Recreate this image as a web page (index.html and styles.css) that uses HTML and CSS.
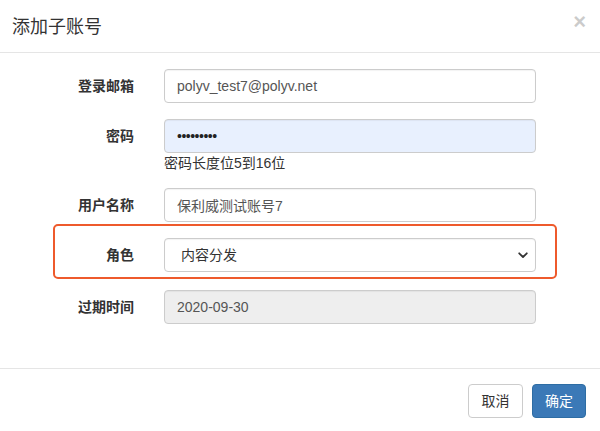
FILE: index.html
```html
<!DOCTYPE html>
<html lang="zh-CN">
<head>
    <meta charset="UTF-8">
    <meta name="viewport" content="width=device-width, initial-scale=1.0">
    <title>添加子账号</title>
    <link rel="stylesheet" href="styles.css">
</head>
<body>
    <div class="modal">
        <div class="modal-header">
            <h4 class="modal-title">添加子账号</h4>
            <button type="button" class="close">&times;</button>
        </div>
        <form class="modal-body">
            <div class="form-row row-email">
                <label class="form-label">登录邮箱</label>
                <input class="form-control" type="text" value="polyv_test7@polyv.net">
            </div>
            <div class="form-row row-password">
                <label class="form-label">密码</label>
                <div>
                    <input class="form-control autofilled" type="password" value="123456789">
                    <p class="help-text">密码长度位5到16位</p>
                </div>
            </div>
            <div class="form-row row-name">
                <label class="form-label">用户名称</label>
                <input class="form-control" type="text" value="保利威测试账号7">
            </div>
            <div class="form-row row-role highlight">
                <label class="form-label">角色</label>
                <div class="select-wrap">
                    <select class="form-control">
                        <option>内容分发</option>
                    </select>
                    <svg class="select-arrow" width="10" height="7" viewBox="0 0 10 7">
                        <path d="M1.2 1.3 L5 5 L8.8 1.3" fill="none" stroke="#333" stroke-width="1.8" stroke-linecap="round" stroke-linejoin="round"/>
                    </svg>
                </div>
            </div>
            <div class="form-row row-expire">
                <label class="form-label">过期时间</label>
                <input class="form-control" type="text" value="2020-09-30" disabled>
            </div>
        </form>
        <div class="modal-footer">
            <button type="button" class="btn btn-default">取消</button>
            <button type="button" class="btn btn-primary">确定</button>
        </div>
    </div>
</body>
</html>
```

FILE: styles.css
```css
* {
    margin: 0;
    padding: 0;
    box-sizing: border-box;
}

body {
    background-color: #ffffff;
    color: #333333;
    font-family: "Liberation Sans", "Noto Sans CJK SC", sans-serif;
    font-size: 14px;
    line-height: 20px;
}

.modal {
    width: 600px;
    height: 431px;
    background-color: #ffffff;
}

.modal-header {
    display: flex;
    align-items: center;
    justify-content: space-between;
    height: 53px;
    padding: 0 14px 0 12px;
    border-bottom: 1px solid #e5e5e5;
}

.modal-title {
    font-size: 18px;
    font-weight: normal;
    color: #333333;
    line-height: 26px;
    margin-top: 1px;
}

.close {
    border: none;
    background: transparent;
    font-size: 22px;
    font-weight: bold;
    line-height: 1;
    color: #000000;
    opacity: 0.2;
    cursor: pointer;
    margin-top: -8px;
}

.modal-body {
    padding: 16px 0 44px 0;
}

.form-row {
    display: grid;
    grid-template-columns: 134px 372px;
    column-gap: 30px;
    align-items: start;
}

.row-email {
    margin-bottom: 16px;
}

.row-password {
    margin-bottom: 15px;
}

.row-name {
    margin-bottom: 16px;
}

.row-role {
    margin-bottom: 18px;
}

.form-label {
    text-align: right;
    font-weight: bold;
    padding-top: 7px;
    line-height: 20px;
}

.form-control {
    display: block;
    width: 100%;
    height: 34px;
    padding: 6px 12px;
    font-family: inherit;
    font-size: 14px;
    line-height: 20px;
    color: #555555;
    background-color: #ffffff;
    border: 1px solid #cccccc;
    border-radius: 4px;
    box-shadow: inset 0 1px 1px rgba(0, 0, 0, 0.05);
}

.form-control.autofilled {
    background-color: #e8f0fe;
    color: #222222;
    letter-spacing: -0.5px;
}

.form-control:disabled {
    background-color: #eeeeee;
    color: #555555;
}

.help-text {
    color: #333333;
    line-height: 20px;
}

/* role select with custom arrow */
.select-wrap {
    position: relative;
}

.select-wrap select {
    appearance: none;
    -webkit-appearance: none;
    padding-left: 16px;
    color: #333333;
}

.select-arrow {
    position: absolute;
    right: 8px;
    top: 14px;
    pointer-events: none;
}

/* orange frame around the role row */
.highlight {
    position: relative;
}

.highlight::before {
    content: "";
    position: absolute;
    left: 53px;
    right: 43px;
    top: -14px;
    bottom: -7px;
    border: 2px solid #ee5a2c;
    border-radius: 5px;
    pointer-events: none;
}

.modal-footer {
    display: flex;
    justify-content: flex-end;
    gap: 9px;
    padding: 15px 14px 15px 15px;
    border-top: 1px solid #e5e5e5;
}

.btn {
    height: 34px;
    padding: 6px 12px;
    font-family: inherit;
    font-size: 14px;
    line-height: 20px;
    border: 1px solid transparent;
    border-radius: 4px;
    cursor: pointer;
}

.btn-default {
    width: 55px;
    color: #333333;
    background-color: #ffffff;
    border-color: #cccccc;
}

.btn-primary {
    width: 54px;
    color: #ffffff;
    background-color: #3b79b7;
    border-color: #2e6da4;
}
```
